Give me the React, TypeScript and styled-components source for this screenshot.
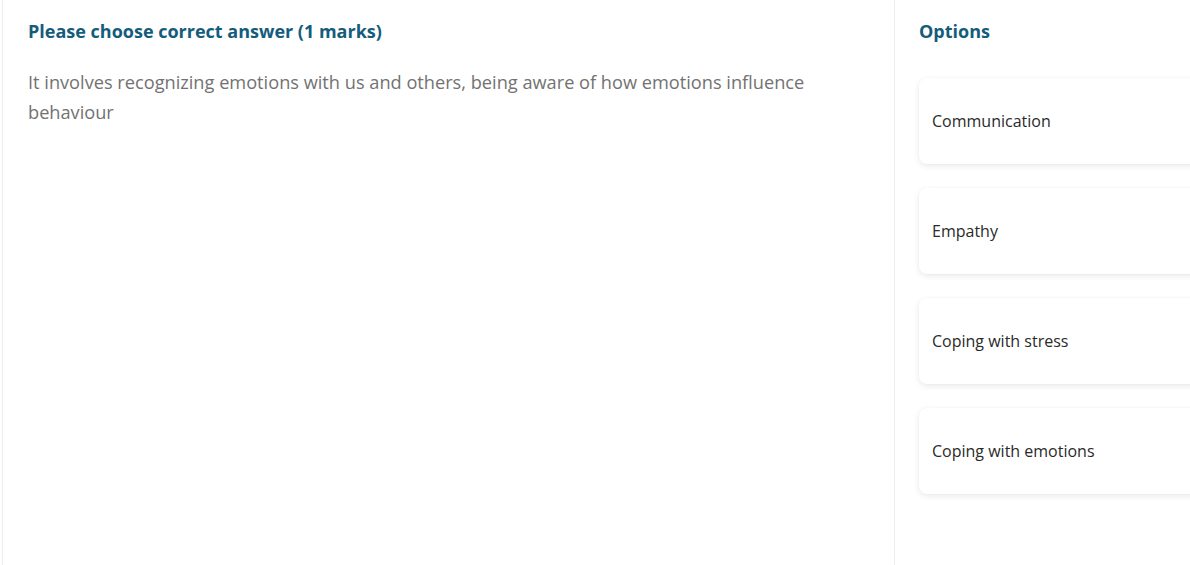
import styled, { createGlobalStyle } from "styled-components"

const GlobalStyle = createGlobalStyle`
  html, body {
    margin: 0;
    padding: 0;
    background: #ffffff;
    overflow: hidden;
  }
  body {
    font-family: 'Open Sans', 'Liberation Sans', sans-serif;
  }
`

const options = ['Communication', 'Empathy', 'Coping with stress', 'Coping with emotions']

const Page = styled.div`
  display: flex;
  height: 565px;
  margin-left: 2px;
  border-left: 1px solid #ececec;
`

const QuestionPanel = styled.section`
  flex: 0 0 891px;
  box-sizing: border-box;
  padding: 19px 60px 0 25px;
`

const Heading = styled.h2`
  margin: 0;
  font-size: 18px;
  font-weight: 700;
  line-height: 24px;
  color: #145c7c;
`

const QuestionText = styled.p`
  margin: 24px 0 0;
  font-size: 18.2px;
  line-height: 30px;
  color: #727272;
`

const OptionsPanel = styled.aside`
  flex: 0 0 auto;
  width: 300px;
  box-sizing: border-box;
  border-left: 1px solid #efefef;
  padding: 19px 0 0 24px;
`

const OptionList = styled.div`
  display: flex;
  flex-direction: column;
  gap: 24px;
  margin-top: 35px;
`

const OptionCard = styled.div`
  width: 320px;
  height: 86px;
  box-sizing: border-box;
  display: flex;
  align-items: center;
  padding: 0 13px;
  background: #ffffff;
  border-radius: 8px;
  box-shadow: 0 2px 6px rgba(0, 0, 0, 0.09), 0 0 2px rgba(0, 0, 0, 0.03);
  font-size: 16px;
  color: #2a2a2a;
`

const App = () => {
  return (
    <>
      <GlobalStyle />
      <Page>
        <QuestionPanel>
          <Heading>Please choose correct answer (1 marks)</Heading>
          <QuestionText>
            It involves recognizing emotions with us and others, being aware of how emotions influence behaviour
          </QuestionText>
        </QuestionPanel>
        <OptionsPanel>
          <Heading>Options</Heading>
          <OptionList>
            {options.map(option => (
              <OptionCard key={option}>{option}</OptionCard>
            ))}
          </OptionList>
        </OptionsPanel>
      </Page>
    </>
  )
}

export default App
